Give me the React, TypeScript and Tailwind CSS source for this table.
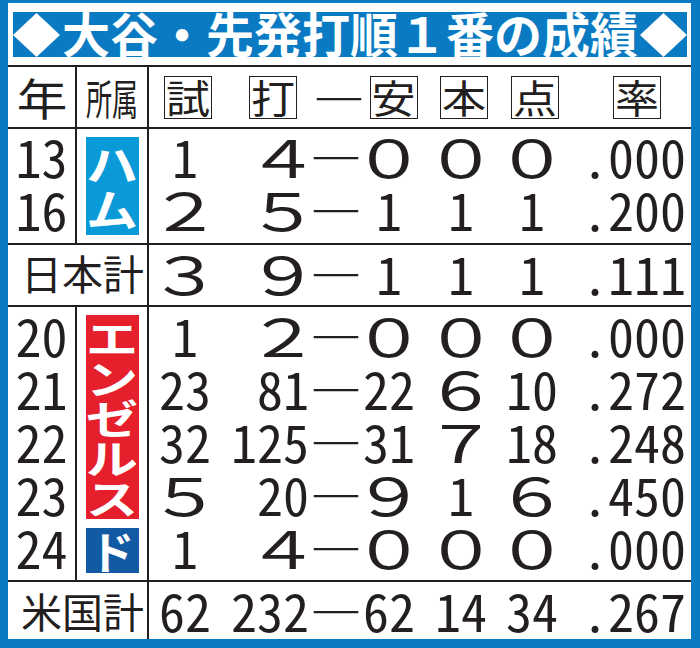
import React from "react";

const FONT = "font-['Noto_Sans_CJK_JP','Noto_Sans_CJK_SC',sans-serif]";

// 年, 試, 打, 安, 本, 点, 率
type Line = [string, string, string, string, string, string, string];

const JAPAN: Line[] = [
  ["13", "１", "４", "０", "０", "０", ".000"],
  ["16", "２", "５", "１", "１", "１", ".200"],
];
const JAPAN_TOTAL: Line = ["", "３", "９", "１", "１", "１", ".111"];

const USA: Line[] = [
  ["20", "１", "２", "０", "０", "０", ".000"],
  ["21", "23", "81", "22", "６", "10", ".272"],
  ["22", "32", "125", "31", "７", "18", ".248"],
  ["23", "５", "20", "９", "１", "６", ".450"],
  ["24", "１", "４", "０", "０", "０", ".000"],
];
const USA_TOTAL: Line = ["", "62", "232", "62", "14", "34", ".267"];

function Num({ v }: { v: string }) {
  // ascii digits are set half-width; single full-width digits are widened,
  // except the one, which keeps the plain figure centred in its em
  const half = /[0-9.]/.test(v);
  if (half) return <span className="[font-feature-settings:'hwid']">{v}</span>;
  if (v === "１") return <span className="inline-block w-[52px] text-center [font-feature-settings:'hwid']">1</span>;
  return <span className="inline-block scale-x-[1.4]">{v}</span>;
}

function Cells({ r }: { r: Line }) {
  return (
    <div className="flex text-[52px]">
      <div className="ml-[10px] w-[52px] text-center"><Num v={r[1]} /></div>
      <div className="w-[98px] text-right"><Num v={r[2]} /></div>
      <div className="w-[54px] text-center">―</div>
      <div className="w-[52px] text-center"><Num v={r[3]} /></div>
      <div className="ml-[20px] w-[52px] text-center"><Num v={r[4]} /></div>
      <div className="ml-[19px] w-[52px] text-center"><Num v={r[5]} /></div>
      <div className="flex-1 pr-[5px] text-right"><Num v={r[6]} /></div>
    </div>
  );
}

function Box({ c }: { c: string }) {
  return (
    <span className="flex h-[43px] w-[48px] items-center justify-center border-[1.5px] border-[#231f20] text-[44px] leading-none">
      <span className="inline-block -translate-y-[1px] scale-y-[0.88]">{c}</span>
    </span>
  );
}

function Diamond() {
  return (
    <svg width="47" height="44" viewBox="0 0 47 44" className="shrink-0">
      <polygon points="23.5,0 47,22 23.5,44 0,22" fill="#fff" />
    </svg>
  );
}

function StackLabel({ chars, pitch, stretch, className }: { chars: string; pitch: string; stretch: string; className: string }) {
  return (
    <div className={`flex flex-col items-center font-bold text-white ${className}`}>
      {chars.split("").map((c) => (
        <div key={c} className={pitch}>
          <span className={`inline-block ${stretch}`}>{c}</span>
        </div>
      ))}
    </div>
  );
}

export default function App() {
  return (
    <div className={`h-[648px] w-[700px] overflow-hidden bg-[#0a7bc2] pb-[9px] pl-[8px] pr-[9px] pt-[3px] text-[#231f20] ${FONT}`}>
      <div className="flex h-full flex-col bg-white">
        {/* title */}
        <div className="ml-[5px] mr-[4px] mt-[9px] flex h-[45px] items-center justify-between bg-[#0a7bc2] text-[48px] font-bold leading-[45px] text-white">
          <Diamond />
          <span className="-translate-y-[2px] whitespace-nowrap">大谷・先発打順１番の成績</span>
          <Diamond />
        </div>

        <div className="mt-[8px] flex min-h-0 flex-1 flex-col border-t-2 border-[#231f20]">
          {/* header */}
          <div className="flex h-[62px] shrink-0 border-b-2 border-[#231f20]">
            <div className="flex w-[69px] items-center justify-center border-r-2 border-[#231f20] text-[44px] leading-none">
              <span className="inline-block scale-x-[1.15]">年</span>
            </div>
            <div className="flex w-[72px] items-center justify-center whitespace-nowrap border-r-2 border-[#231f20] text-[42px] leading-none">
              <span className="inline-block scale-x-[0.62]">所属</span>
            </div>
            <div className="flex flex-1 items-center">
              <div className="ml-[13px] flex w-[52px] justify-center"><Box c="試" /></div>
              <div className="flex w-[98px] justify-end pr-[15px]"><Box c="打" /></div>
              <div className="w-[54px] text-center text-[52px] leading-none">―</div>
              <div className="flex w-[52px] justify-center pl-[3px]"><Box c="安" /></div>
              <div className="ml-[20px] flex w-[52px] justify-center"><Box c="本" /></div>
              <div className="ml-[19px] flex w-[52px] justify-center"><Box c="点" /></div>
              <div className="flex flex-1 justify-end pr-[30px]"><Box c="率" /></div>
            </div>
          </div>

          {/* Japan */}
          <div className="flex h-[116px] shrink-0 border-b-2 border-[#231f20]">
            <div className="w-[69px] border-r-2 border-[#231f20] text-center text-[52px] leading-[53px]">
              {JAPAN.map((r) => (
                <div key={r[0]} className="h-[53px]"><Num v={r[0]} /></div>
              ))}
            </div>
            <div className="flex w-[72px] items-center justify-center border-r-2 border-[#231f20]">
              <StackLabel chars="ハム" pitch="h-[45px] text-[44px] leading-[45px]" stretch="scale-x-[1.18]" className="h-[98px] w-[53px] justify-center bg-[#0b9ad8]" />
            </div>
            <div className="flex-1 leading-[53px]">
              {JAPAN.map((r) => (
                <div key={r[0]} className="h-[53px]"><Cells r={r} /></div>
              ))}
            </div>
          </div>

          <div className="flex h-[62px] shrink-0 border-b-2 border-[#231f20]">
            <div className="w-[141px] whitespace-nowrap border-r-2 border-[#231f20] pl-[13px] text-[41px] leading-[55px]">日本計</div>
            <div className="flex-1 leading-[55px]"><Cells r={JAPAN_TOTAL} /></div>
          </div>

          {/* USA */}
          <div className="flex h-[275px] shrink-0 border-b-2 border-[#231f20]">
            <div className="w-[69px] border-r-2 border-[#231f20] pt-[1px] text-center text-[52px] leading-[53px]">
              {USA.map((r) => (
                <div key={r[0]} className="h-[53px]"><Num v={r[0]} /></div>
              ))}
            </div>
            <div className="flex w-[72px] flex-col items-center gap-[9px] border-r-2 border-[#231f20] pt-[8px]">
              <StackLabel chars="エンゼルス" pitch="h-[40px] text-[40px] leading-[40px]" stretch="scale-x-[1.3]" className="h-[204px] w-[53px] justify-center bg-[#e51f2b]" />
              <StackLabel chars="ド" pitch="h-[45px] text-[45px] leading-[45px]" stretch="" className="h-[45px] w-[53px] justify-center bg-[#125aa4]" />
            </div>
            <div className="flex-1 pt-[1px] leading-[53px]">
              {USA.map((r) => (
                <div key={r[0]} className="h-[53px]"><Cells r={r} /></div>
              ))}
            </div>
          </div>

          <div className="flex min-h-0 flex-1">
            <div className="w-[141px] whitespace-nowrap border-r-2 border-[#231f20] pl-[13px] text-[41px] leading-[56px]">米国計</div>
            <div className="flex-1 leading-[56px]"><Cells r={USA_TOTAL} /></div>
          </div>
        </div>
      </div>
    </div>
  );
}
